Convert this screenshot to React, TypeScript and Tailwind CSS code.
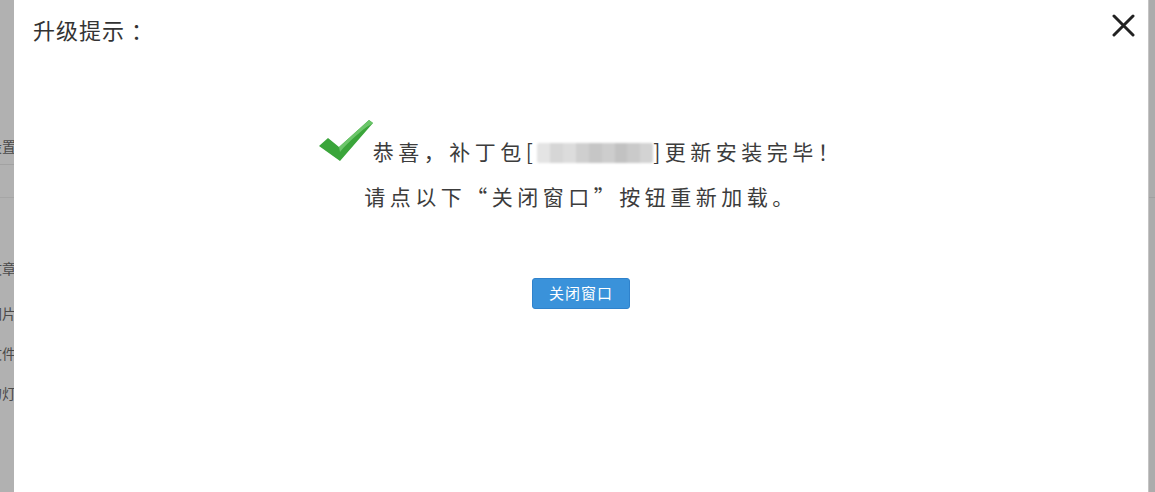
import React from 'react';

const cjk = '"Noto Sans CJK SC", "Liberation Sans", sans-serif';

// the menu labels behind the overlay, only their last glyphs show at the edge
const sideItems = [
  { label: '设置', top: 'mt-[136px]' },
  { label: '文章', top: 'mt-[102px]' },
  { label: '图片', top: 'mt-[25px]' },
  { label: '文件', top: 'mt-[20px]' },
  { label: '幻灯', top: 'mt-[20px]' },
];

const CheckMark: React.FC = () => (
  <svg width="54" height="44" viewBox="0 0 54 44" className="shrink-0">
    <path d="M0 27 L9 19 L20 28 L50 1 L54 4 L21 42 Z" fill="#3aa53a" />
    <path d="M20 28 L50 1 L54 4 L51 6 C44 10 30 22 21 33 Z" fill="#6cc66a" />
  </svg>
);

// pixelated patch covering the package name
const Masked: React.FC = () => {
  const shades = ['#e4e4e4', '#d6d6d6', '#dcdcdc', '#cfcfcf', '#c6c6c6', '#cdcdcd', '#c2c2c2', '#cacaca', '#d3d3d3'];
  return (
    <span className="inline-flex h-[20px] w-[116px] overflow-hidden rounded-[2px] blur-[1px] align-[-3px]">
      {shades.map((c, i) => (
        <span key={i} className="h-full flex-1" style={{ backgroundColor: c }} />
      ))}
    </span>
  );
};

const App: React.FC = () => {
  return (
    <div className="flex h-[492px] w-[1155px] overflow-hidden bg-[#b1b1b1]" style={{ fontFamily: cjk }}>
      {/* left edge of the page under the overlay */}
      <div className="relative flex w-[14px] shrink-0 flex-col overflow-hidden text-[14px] leading-[20px] text-[#4a4a4a]">
        {sideItems.map((it) => (
          <div key={it.label} className={`flex justify-end ${it.top} mr-[-2px] whitespace-nowrap`}>
            {it.label}
          </div>
        ))}
        <div className="absolute left-0 right-0 top-[164px] h-px bg-[#a2a2a2]" />
        <div className="absolute left-0 right-0 top-[197px] h-px bg-[#a6a6a6]" />
      </div>

      {/* dialog */}
      <div className="flex flex-1 flex-col bg-white">
        <div className="flex items-start justify-between pl-[19px] pr-[13px] pt-[13px]">
          <h2 className="text-[22px] leading-[32px] font-normal tracking-[1px] text-[#333]">
            升级提示<span className="ml-[6px]">：</span>
          </h2>
          <button className="flex h-[24px] w-[24px] items-center justify-center" title="关闭">
            <svg width="23" height="23" viewBox="0 0 23 23">
              <path d="M2 2 L21 21 M21 2 L2 21" stroke="#222" strokeWidth="3" strokeLinecap="round" />
            </svg>
          </button>
        </div>

        <div className="mt-[74px] flex flex-col items-center text-[21px] tracking-[4.5px] text-[#3c3c3c]">
          <div className="flex items-end">
            <CheckMark />
            <p className="mb-[-1px] leading-[26px]">
              恭喜，补丁包[<Masked />]更新安装完毕！
            </p>
          </div>
          <p className="mt-[20px] leading-[26px]">请点以下“关闭窗口”按钮重新加载。</p>
        </div>

        <div className="mt-[69px] flex justify-center">
          <button className="h-[31px] w-[98px] rounded-[3px] border border-[#2f82cc] bg-[#3a92da] text-[15px] tracking-[1px] text-white">
            关闭窗口
          </button>
        </div>
      </div>

      {/* right edge */}
      <div className="relative w-[7px] shrink-0 border-l border-[#c4c4c4] bg-[#acacac]">
        <div className="absolute left-0 right-0 top-[197px] h-px bg-[#a0a0a0]" />
      </div>
    </div>
  );
};

export default App;
